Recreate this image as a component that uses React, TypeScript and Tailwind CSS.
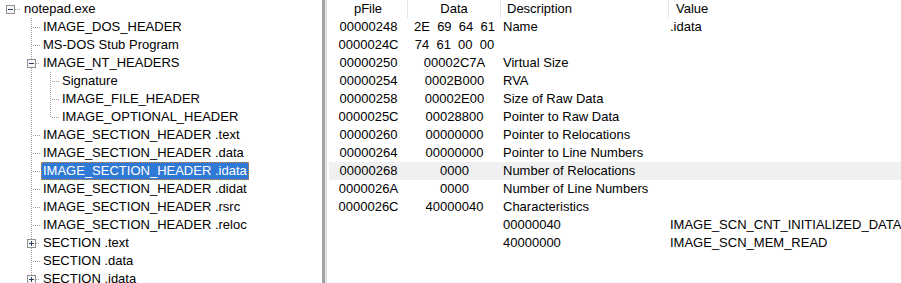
import React from 'react';

type TreeItem = {
  label: string;
  level: number;
  box?: 'minus' | 'plus';
  last?: boolean;
  selected?: boolean;
};

const tree: TreeItem[] = [
  { label: 'notepad.exe', level: 0, box: 'minus' },
  { label: 'IMAGE_DOS_HEADER', level: 1 },
  { label: 'MS-DOS Stub Program', level: 1 },
  { label: 'IMAGE_NT_HEADERS', level: 1, box: 'minus' },
  { label: 'Signature', level: 2 },
  { label: 'IMAGE_FILE_HEADER', level: 2 },
  { label: 'IMAGE_OPTIONAL_HEADER', level: 2, last: true },
  { label: 'IMAGE_SECTION_HEADER .text', level: 1 },
  { label: 'IMAGE_SECTION_HEADER .data', level: 1 },
  { label: 'IMAGE_SECTION_HEADER .idata', level: 1, selected: true },
  { label: 'IMAGE_SECTION_HEADER .didat', level: 1 },
  { label: 'IMAGE_SECTION_HEADER .rsrc', level: 1 },
  { label: 'IMAGE_SECTION_HEADER .reloc', level: 1 },
  { label: 'SECTION .text', level: 1, box: 'plus' },
  { label: 'SECTION .data', level: 1 },
  { label: 'SECTION .idata', level: 1, box: 'plus' },
];

const rows = [
  { pFile: '00000248', data: '2E  69  64  61', desc: 'Name', value: '.idata' },
  { pFile: '0000024C', data: '74  61  00  00', desc: '', value: '' },
  { pFile: '00000250', data: '00002C7A', desc: 'Virtual Size', value: '' },
  { pFile: '00000254', data: '0002B000', desc: 'RVA', value: '' },
  { pFile: '00000258', data: '00002E00', desc: 'Size of Raw Data', value: '' },
  { pFile: '0000025C', data: '00028800', desc: 'Pointer to Raw Data', value: '' },
  { pFile: '00000260', data: '00000000', desc: 'Pointer to Relocations', value: '' },
  { pFile: '00000264', data: '00000000', desc: 'Pointer to Line Numbers', value: '' },
  { pFile: '00000268', data: '0000', desc: 'Number of Relocations', value: '', hover: true },
  { pFile: '0000026A', data: '0000', desc: 'Number of Line Numbers', value: '' },
  { pFile: '0000026C', data: '40000040', desc: 'Characteristics', value: '' },
  { pFile: '', data: '', desc: '00000040', value: 'IMAGE_SCN_CNT_INITIALIZED_DATA' },
  { pFile: '', data: '', desc: '40000000', value: 'IMAGE_SCN_MEM_READ' },
];

const lineX = [10, 31, 50];
const textX = [24, 43, 62];
const dotColor = '#a0a0a0';

const TreeLines: React.FC<{ item: TreeItem }> = ({ item }) => {
  const { level, box, last } = item;
  const w = textX[level] - 2;
  const cx = lineX[level];
  return (
    <svg width={w} height={18} className="shrink-0">
      {level >= 2 && (
        <line x1={lineX[1] + 0.5} y1={0} x2={lineX[1] + 0.5} y2={18} stroke={dotColor} strokeDasharray="1 1" />
      )}
      {level >= 1 && (
        <line x1={cx + 0.5} y1={0} x2={cx + 0.5} y2={last ? 10 : 18} stroke={dotColor} strokeDasharray="1 1" />
      )}
      <line x1={box ? cx + 5 : cx + 2} y1={9.5} x2={w - 1} y2={9.5} stroke={dotColor} strokeDasharray="1 1" />
      {box && (
        <g>
          <rect x={cx - 3.5} y={5.5} width={8} height={8} fill="#f7f7f7" stroke="#919191" />
          <line x1={cx - 2} y1={9.5} x2={cx + 3} y2={9.5} stroke="#2b3f66" />
          {box === 'plus' && <line x1={cx + 0.5} y1={7} x2={cx + 0.5} y2={12} stroke="#2b3f66" />}
        </g>
      )}
    </svg>
  );
};

const App: React.FC = () => {
  return (
    <div
      className="flex h-[283px] w-[901px] overflow-hidden bg-white text-[13px] leading-[18px] text-black"
      style={{ fontFamily: '"Liberation Sans", Arial, sans-serif' }}
    >
      {/* Tree view */}
      <div className="w-[322px] shrink-0">
        {tree.map((item) => (
          <div key={item.label} className="flex h-[18px] items-center">
            <TreeLines item={item} />
            <span
              className={
                item.selected
                  ? 'whitespace-nowrap border border-dotted border-[#d9822b] bg-[#3079d6] px-[1px] leading-[16px] text-white'
                  : 'whitespace-nowrap border border-transparent px-[1px] leading-[16px]'
              }
            >
              {item.label}
            </span>
          </div>
        ))}
      </div>

      {/* Splitter */}
      <div className="w-[3px] shrink-0 bg-[#a3a3a3]" />
      <div className="w-[2px] shrink-0 bg-[#e1e1e1]" />

      {/* List view */}
      <div className="flex-1 pl-[2px]">
        <div className="grid h-[18px] grid-cols-[79px_93px_168px_1fr]">
          <div className="border-r border-[#e5e5e5] text-center">pFile</div>
          <div className="border-r border-[#e5e5e5] text-center">Data</div>
          <div className="border-r border-[#e5e5e5] pl-[6px]">Description</div>
          <div className="pl-[7px]">Value</div>
        </div>
        {rows.map((r, i) => (
          <div
            key={i}
            className={`grid h-[18px] grid-cols-[79px_93px_168px_1fr] whitespace-nowrap ${r.hover ? 'bg-[#f0f0f0]' : ''}`}
          >
            <div className="text-center">{r.pFile}</div>
            <div className="whitespace-pre text-center">{r.data}</div>
            <div className="pl-[2px]">{r.desc}</div>
            <div className="pl-[1px]">{r.value}</div>
          </div>
        ))}
      </div>
    </div>
  );
};

export default App;
